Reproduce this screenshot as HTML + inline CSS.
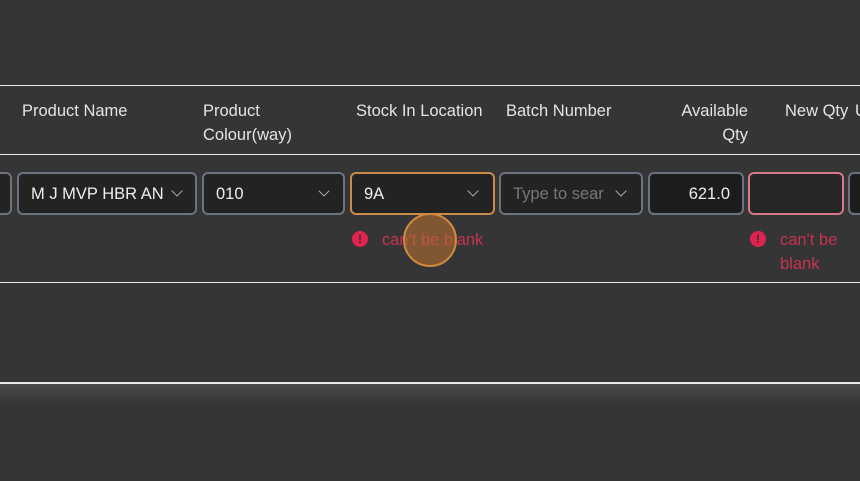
<!DOCTYPE html>
<html><head><style>
body{margin:0;width:860px;height:481px;background:#353535;position:relative;overflow:hidden;font-family:"Liberation Sans","DejaVu Sans",sans-serif;color:#e6e6e6}
.line{position:absolute;left:0;width:860px;background:#e8e8e8}
.h{position:absolute;font-size:16.5px;line-height:24px;color:#e4e4e4}
.box{position:absolute;top:172px;height:43px;box-sizing:border-box;border:2px solid #6b7280;border-radius:6px;background:#232323;font-size:16.5px;line-height:40px;padding-left:12px;color:#eee;white-space:nowrap;overflow:hidden}
.chev{position:absolute;top:13px;width:7px;height:7px;border-right:1.5px solid #aaa;border-bottom:1.5px solid #aaa;transform:rotate(45deg)}
.err{position:absolute;color:#c8324f;font-size:16.5px;line-height:24px}
.ic{position:absolute;width:16px;height:16px;border-radius:50%;background:#e0234e;color:#333;font-size:12px;font-weight:bold;text-align:center;line-height:16px}
</style></head><body>
<div class="line" style="top:85px;height:1px"></div>
<div class="line" style="top:154px;height:1px"></div>
<div class="line" style="top:282px;height:1px"></div>
<div class="line" style="top:382px;height:2px"></div>
<div style="position:absolute;top:384px;left:0;width:860px;height:20px;background:linear-gradient(#4a4a4a,#353535)"></div>
<div class="h" style="left:22px;top:99px">Product Name</div>
<div class="h" style="left:203px;top:99px">Product<br>Colour(way)</div>
<div class="h" style="left:356px;top:99px">Stock In Location</div>
<div class="h" style="left:506px;top:99px">Batch Number</div>
<div class="h" style="left:660px;top:99px;width:88px;text-align:right">Available<br>Qty</div>
<div class="h" style="left:785px;top:99px">New Qty</div>
<div class="h" style="left:855px;top:99px">U</div>
<div class="box" style="left:-10px;width:22px"></div>
<div class="box" style="left:17px;width:180px">M J MVP HBR AN<div class="chev" style="left:154px"></div></div>
<div class="box" style="left:202px;width:143px">010<div class="chev" style="left:116px"></div></div>
<div class="box" style="left:350px;width:145px;border-color:#c98a4b">9A<div class="chev" style="left:117px"></div></div>
<div class="box" style="left:499px;width:144px;color:#777">Type to sear<div class="chev" style="left:116px"></div></div>
<div class="box" style="left:648px;width:96px;background:#1c1c1c;text-align:right;padding-right:12px">621.0</div>
<div class="box" style="left:748px;width:96px;border-color:#d5788a;background:#262626"></div>
<div class="box" style="left:848px;width:30px;background:#1c1c1c"></div>
<div class="ic" style="left:352px;top:231px">!</div>
<div class="err" style="left:382px;top:228px">can't be blank</div>
<div class="ic" style="left:750px;top:231px">!</div>
<div class="err" style="left:780px;top:228px">can't be<br>blank</div>
<div style="position:absolute;left:403px;top:213px;width:54px;height:54px;border-radius:50%;background:rgba(180,110,50,0.6);border:2px solid #d08a40;box-sizing:border-box"></div>
</body></html>
